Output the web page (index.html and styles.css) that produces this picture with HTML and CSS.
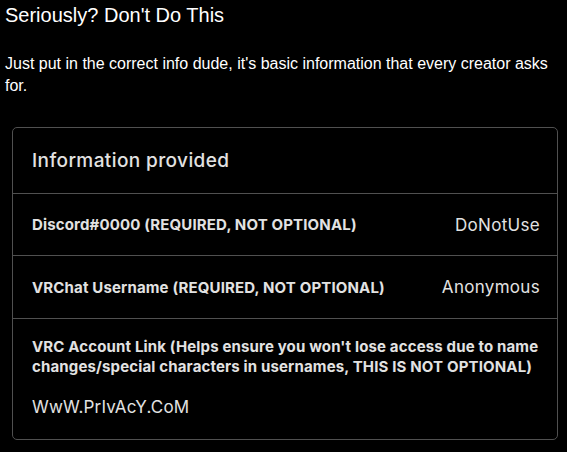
FILE: index.html
```html
<!DOCTYPE html>
<html>
<head>
<meta charset="utf-8">
<link rel="stylesheet" href="styles.css">
</head>
<body>
<h1 class="title">Seriously? Don't Do This</h1>
<p class="desc">Just put in the correct info dude, it's basic information that every creator asks for.</p>
<div class="card">
  <div class="card-head">Information provided</div>
  <div class="row">
    <span class="label">Discord#0000 (REQUIRED, NOT OPTIONAL)</span>
    <span class="value">DoNotUse</span>
  </div>
  <div class="row">
    <span class="label">VRChat Username (REQUIRED, NOT OPTIONAL)</span>
    <span class="value">Anonymous</span>
  </div>
  <div class="row row-stack">
    <span class="label">VRC Account Link (Helps ensure you won't lose access due to name changes/special characters in usernames, THIS IS NOT OPTIONAL)</span>
    <span class="value">WwW.PrIvAcY.CoM</span>
  </div>
</div>
</body>
</html>
```
FILE: styles.css
```css
html, body {
  margin: 0;
  background: #000;
}
body {
  padding: 0 5px;
  font-family: "Liberation Sans", Arial, sans-serif;
  color: #fff;
}
.title {
  margin: 0;
  padding-top: 3px;
  font-size: 20px;
  font-weight: 400;
  line-height: 24px;
}
.desc {
  margin: 26px 0 0;
  font-size: 16px;
  line-height: 22px;
}
.card {
  margin: 30px 4px 0 7px;
  border: 1px solid #505050;
  border-radius: 5px;
  font-family: Inter, "Noto Sans", sans-serif;
  color: #e2e2e2;
}
.card-head {
  height: 65px;
  display: flex;
  align-items: center;
  padding: 0 18px 0 19px;
  font-size: 19px;
  font-weight: 500;
  letter-spacing: 0.4px;
  border-bottom: 1px solid #505050;
}
.row {
  height: 61px;
  display: flex;
  align-items: center;
  justify-content: space-between;
  padding: 0 17px 0 19px;
  border-bottom: 1px solid #505050;
}
.row + .row {
  height: 62px;
}
.row:last-child {
  border-bottom: none;
}
.label {
  font-size: 15px;
  font-weight: 700;
  letter-spacing: 0.15px;
}
.value {
  font-size: 17px;
  letter-spacing: 0.3px;
}
.row.row-stack {
  height: auto;
  flex-direction: column;
  align-items: flex-start;
  padding: 18px 18px 22px 19px;
  gap: 20px;
}
.row-stack .label {
  line-height: 20px;
}
.row-stack .value {
  font-size: 17px;
  letter-spacing: 0.2px;
}
```
